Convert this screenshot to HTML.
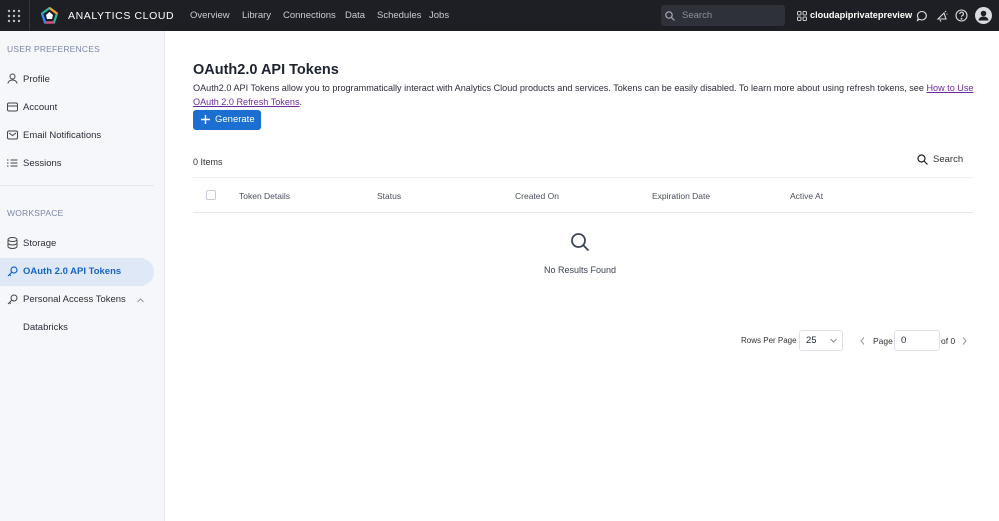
<!DOCTYPE html>
<html><head><style>
*{box-sizing:border-box;margin:0;padding:0}
body{width:999px;height:521px;overflow:hidden;font-family:"Liberation Sans",sans-serif;background:#fff;color:#1f2937;position:relative}
.top{position:absolute;left:0;top:0;width:999px;height:31px;background:#1d1f24;color:#fff}
.top .nav{position:absolute;top:10px;font-size:9.5px;color:#c9ccd2}
.side{position:absolute;left:0;top:31px;width:165px;height:490px;background:#f6f7fb;border-right:1px solid #e6e8ee}
.sh{position:absolute;left:7px;font-size:8.5px;color:#7d86a6;letter-spacing:.2px}
.si{position:absolute;left:23px;font-size:9.5px;color:#2b2f38}
.ic{position:absolute;left:7px}
.main{position:absolute;left:193px}
.th{position:absolute;top:191px;font-size:8.5px;color:#4b5060}
</style></head><body>
<div class="top">
 <svg style="position:absolute;left:7px;top:9px" width="14" height="14"><g fill="#b8bcc6"><circle cx="2" cy="2" r="1.2"/><circle cx="7" cy="2" r="1.2"/><circle cx="12" cy="2" r="1.2"/><circle cx="2" cy="7" r="1.2"/><circle cx="7" cy="7" r="1.2"/><circle cx="12" cy="7" r="1.2"/><circle cx="2" cy="12" r="1.2"/><circle cx="7" cy="12" r="1.2"/><circle cx="12" cy="12" r="1.2"/></g></svg>
 <div style="position:absolute;left:29px;top:0;width:1px;height:31px;background:#33363d"></div>
 <svg style="position:absolute;left:41px;top:7px" width="17" height="17"><polygon points="8.5,1 16,6.5 13,15.5 4,15.5 1,6.5" fill="none" stroke="#2fb5a0" stroke-width="2.2"/><polyline points="8.5,1 16,6.5" stroke="#f2a12b" stroke-width="2.2" fill="none"/><polyline points="13,15.5 4,15.5" stroke="#e8467c" stroke-width="2.2"/><polyline points="4,15.5 1,6.5" stroke="#3b82f6" stroke-width="2.2"/><polygon points="8.5,5 12,8 11,12 6,12 5,8" fill="#fff"/></svg>
 <div style="position:absolute;left:68px;top:10px;font-size:10.5px;letter-spacing:.6px;color:#fff">ANALYTICS CLOUD</div>
 <div class="nav" style="left:190px">Overview</div>
 <div class="nav" style="left:242px">Library</div>
 <div class="nav" style="left:283px">Connections</div>
 <div class="nav" style="left:345px">Data</div>
 <div class="nav" style="left:377px">Schedules</div>
 <div class="nav" style="left:429px">Jobs</div>
 <div style="position:absolute;left:661px;top:5px;width:124px;height:21px;background:#2e3138;border-radius:3px"></div>
 <svg style="position:absolute;left:665px;top:11px" width="10" height="10"><circle cx="4" cy="4" r="3.2" fill="none" stroke="#aab" stroke-width="1.2"/><line x1="6.5" y1="6.5" x2="9.5" y2="9.5" stroke="#aab" stroke-width="1.2"/></svg>
 <div style="position:absolute;left:682px;top:10px;font-size:9.5px;color:#8c909a">Search</div>
 <svg style="position:absolute;left:797px;top:11px" width="10" height="10" fill="none" stroke="#ccc" stroke-width="1"><rect x=".5" y=".5" width="3.5" height="3.5" rx="1"/><rect x="6" y=".5" width="3.5" height="3.5" rx="1"/><rect x=".5" y="6" width="3.5" height="3.5" rx="1"/><rect x="6" y="6" width="3.5" height="3.5" rx="1"/></svg>
 <div style="position:absolute;left:810px;top:10px;font-size:9.2px;font-weight:bold;color:#fff">cloudapiprivatepreview</div>
 <svg style="position:absolute;left:916px;top:10px" width="12" height="12" fill="none" stroke="#ddd" stroke-width="1.1"><path d="M6 1.5a4.5 4.2 0 1 1-2.5 7.8L1.5 10.5l.7-2.5A4.5 4.2 0 0 1 6 1.5z"/></svg>
 <svg style="position:absolute;left:936px;top:10px" width="12" height="12" fill="none" stroke="#ddd" stroke-width="1.1"><path d="M2 9l6-6 2 6z M4 10l1 1.5"/><path d="M9 2l1-1M10.5 4h1"/></svg>
 <svg style="position:absolute;left:955px;top:9px" width="13" height="13" fill="none" stroke="#ddd" stroke-width="1.1"><circle cx="6.5" cy="6.5" r="5.5"/><path d="M4.8 5a1.8 1.8 0 1 1 2.4 1.6c-.6.3-.7.7-.7 1.3"/><circle cx="6.5" cy="9.7" r=".4" fill="#ddd"/></svg>
 <svg style="position:absolute;left:975px;top:7px" width="17" height="17"><circle cx="8.5" cy="8.5" r="8.5" fill="#d9dbe0"/><circle cx="8.5" cy="6.5" r="2.8" fill="#1d1f24"/><path d="M3.5 13.5a5 4 0 0 1 10 0z" fill="#1d1f24"/></svg>
</div>

<div class="side">
 <div class="sh" style="top:13px">USER PREFERENCES</div>
 <svg class="ic" style="top:42px" width="11" height="11" fill="none" stroke="#444" stroke-width="1"><circle cx="5.5" cy="3.5" r="2.5"/><path d="M1 10.5a4.5 3.5 0 0 1 9 0"/></svg>
 <div class="si" style="top:43px">Profile</div>
 <svg class="ic" style="top:71px" width="11" height="10" fill="none" stroke="#444" stroke-width="1"><rect x=".5" y="1" width="10" height="8" rx="1.5"/><line x1=".5" y1="4" x2="10.5" y2="4"/></svg>
 <div class="si" style="top:71px">Account</div>
 <svg class="ic" style="top:99px" width="11" height="10" fill="none" stroke="#444" stroke-width="1"><rect x=".5" y="1" width="10" height="8" rx="1.5"/><path d="M2 3l3.5 2.5L9 3"/></svg>
 <div class="si" style="top:99px">Email Notifications</div>
 <svg class="ic" style="top:127px" width="11" height="10" stroke="#444" stroke-width="1"><path d="M0 2h1.5M0 5h1.5M0 8h1.5M3.5 2h7M3.5 5h7M3.5 8h7"/></svg>
 <div class="si" style="top:127px">Sessions</div>
 <div style="position:absolute;left:0;top:154px;width:154px;height:1px;background:#e3e6ee"></div>
 <div class="sh" style="top:177px">WORKSPACE</div>
 <svg class="ic" style="top:206px" width="11" height="12" fill="none" stroke="#444" stroke-width="1"><ellipse cx="5.5" cy="2.5" rx="4.5" ry="2"/><path d="M1 2.5v7c0 1 2 2 4.5 2s4.5-1 4.5-2v-7M1 6c0 1 2 2 4.5 2S10 7 10 6"/></svg>
 <div class="si" style="top:207px">Storage</div>
 <div style="position:absolute;left:0;top:227px;width:154px;height:28px;background:#dfe8f6;border-radius:0 14px 14px 0"></div>
 <svg class="ic" style="top:235px" width="11" height="11" fill="none" stroke="#1a64c8" stroke-width="1.2"><circle cx="7" cy="4" r="3"/><path d="M5 6l-4 4M2.5 8.5l1.3 1.3"/></svg>
 <div class="si" style="top:235px;color:#1a64c8;font-weight:bold">OAuth 2.0 API Tokens</div>
 <svg class="ic" style="top:263px" width="11" height="11" fill="none" stroke="#444" stroke-width="1"><circle cx="7" cy="4" r="3"/><path d="M5 6l-4 4M2.5 8.5l1.3 1.3"/></svg>
 <div class="si" style="top:263px">Personal Access Tokens</div>
 <svg style="position:absolute;left:137px;top:267px" width="7" height="5" fill="none" stroke="#999" stroke-width="1"><path d="M.5 4L3.5 1l3 3"/></svg>
 <div class="si" style="top:291px">Databricks</div>
</div>

<div class="main" style="top:62px;font-size:14.5px;font-weight:bold;color:#1d2330">OAuth2.0 API Tokens</div>
<div class="main" style="top:82px;width:800px;white-space:nowrap;font-size:9.1px;line-height:13.5px;color:#2b2f38">OAuth2.0 API Tokens allow you to programmatically interact with Analytics Cloud products and services. Tokens can be easily disabled. To learn more about using refresh tokens, see <span style="color:#6b2ba0;text-decoration:underline">How to Use</span><br><span style="color:#6b2ba0;text-decoration:underline">OAuth 2.0 Refresh Tokens</span>.</div>
<div class="main" style="top:110px;width:68px;height:20px;background:#1a6fd0;border-radius:3px;color:#fff;font-size:9.5px;line-height:20px;padding-left:22px">Generate</div>
<svg style="position:absolute;left:200px;top:114px" width="11" height="11" stroke="#fff" stroke-width="1.4"><path d="M5.5 1v9M1 5.5h9"/></svg>
<div class="main" style="top:157px;font-size:9px;color:#333">0 Items</div>
<svg style="position:absolute;left:917px;top:154px" width="11" height="11" fill="none" stroke="#222" stroke-width="1.2"><circle cx="4.5" cy="4.5" r="3.5"/><line x1="7" y1="7" x2="10.5" y2="10.5"/></svg>
<div style="position:absolute;left:933px;top:154px;font-size:9.5px;color:#333">Search</div>
<div style="position:absolute;left:193px;top:177px;width:780px;height:1px;background:#eef0f4"></div>
<div style="position:absolute;left:206px;top:190px;width:10px;height:10px;border:1px solid #c8ccd6;border-radius:2px"></div>
<div class="th" style="left:239px">Token Details</div>
<div class="th" style="left:377px">Status</div>
<div class="th" style="left:515px">Created On</div>
<div class="th" style="left:652px">Expiration Date</div>
<div class="th" style="left:790px">Active At</div>
<div style="position:absolute;left:193px;top:212px;width:780px;height:1px;background:#e6e8ee"></div>
<svg style="position:absolute;left:570px;top:232px" width="20" height="20" fill="none" stroke="#3c4356" stroke-width="1.8"><circle cx="8.5" cy="8.5" r="6.5"/><line x1="13.3" y1="13.3" x2="18.5" y2="18.5"/></svg>
<div style="position:absolute;left:544px;top:265px;font-size:9px;color:#3c4356">No Results Found</div>
<div style="position:absolute;left:741px;top:336px;font-size:8px;color:#333">Rows Per Page</div>
<div style="position:absolute;left:799px;top:330px;width:44px;height:21px;border:1px solid #dde1ea;border-radius:3px;font-size:9.5px;line-height:19px;padding-left:6px;background:#fff">25</div>
<svg style="position:absolute;left:830px;top:338px" width="7" height="5" fill="none" stroke="#888" stroke-width="1"><path d="M.5 1l3 3 3-3"/></svg>
<svg style="position:absolute;left:860px;top:337px" width="5" height="8" fill="none" stroke="#999" stroke-width="1"><path d="M4 .5L1 4l3 3.5"/></svg>
<div style="position:absolute;left:873px;top:336px;font-size:8.5px;color:#333">Page</div>
<div style="position:absolute;left:894px;top:330px;width:46px;height:21px;border:1px solid #dde1ea;border-radius:3px;font-size:9.5px;line-height:19px;padding-left:6px">0</div>
<div style="position:absolute;left:941px;top:336px;font-size:8.5px;color:#333">of 0</div>
<svg style="position:absolute;left:962px;top:337px" width="5" height="8" fill="none" stroke="#999" stroke-width="1"><path d="M1 .5L4 4 1 7.5"/></svg>
</body></html>
